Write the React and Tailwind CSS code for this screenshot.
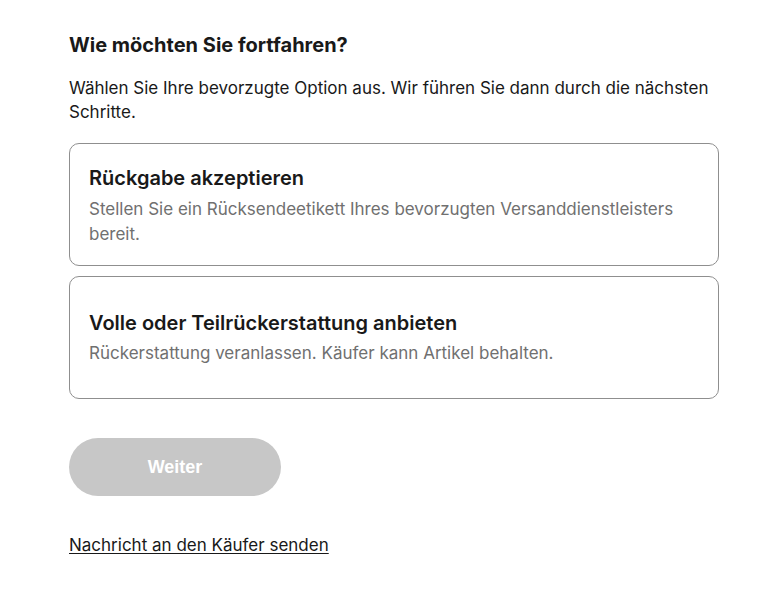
export default function App() {
    return (
        <div className="min-h-screen bg-white font-['Inter',sans-serif] text-[#191919]">
            <div className="w-[650px] ml-[69px] pt-[31px]">
                <h2 className="text-[20px] font-bold leading-[28px]">Wie möchten Sie fortfahren?</h2>
                <p className="mt-[17px] text-[17px] leading-[24px]">
                    Wählen Sie Ihre bevorzugte Option aus. Wir führen Sie dann durch die nächsten Schritte.
                </p>

                <div className="mt-[19px] flex flex-col gap-[10px]">
                    <button className="min-h-[123px] flex flex-col justify-center text-left px-[19px] pt-[2px] rounded-[10px] border border-[#8f8f8f] bg-white">
                        <span className="text-[20px] font-semibold leading-[26px]">Rückgabe akzeptieren</span>
                        <span className="mt-[6px] text-[17px] leading-[25px] text-[#707070]">
                            Stellen Sie ein Rücksendeetikett Ihres bevorzugten Versanddienstleisters bereit.
                        </span>
                    </button>
                    <button className="min-h-[123px] flex flex-col justify-center text-left px-[19px] rounded-[10px] border border-[#8f8f8f] bg-white">
                        <span className="text-[20px] font-semibold leading-[26px]">Volle oder Teilrückerstattung anbieten</span>
                        <span className="mt-[5px] text-[17px] leading-[25px] text-[#707070]">
                            Rückerstattung veranlassen. Käufer kann Artikel behalten.
                        </span>
                    </button>
                </div>

                <button disabled className="mt-[39px] w-[212px] h-[58px] rounded-full bg-[#c7c7c7] text-white text-[18px] font-bold font-['Liberation_Sans',Arial,sans-serif]">
                    Weiter
                </button>

                <div className="mt-[37px]">
                    <a href="#" className="text-[17px] leading-[24px] underline underline-offset-2 text-[#191919]">
                        Nachricht an den Käufer senden
                    </a>
                </div>
            </div>
        </div>
    );
}
